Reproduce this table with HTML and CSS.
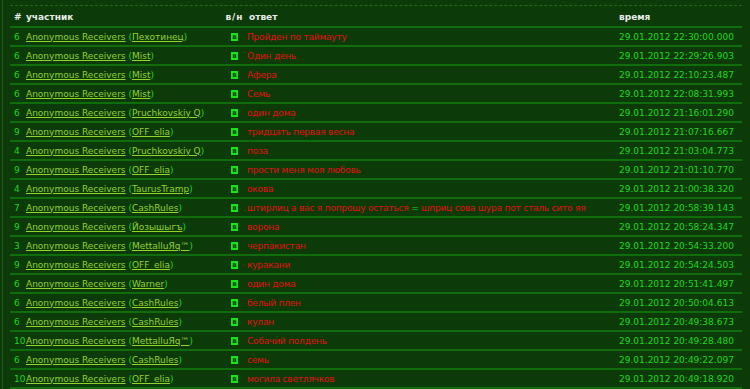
FILE: index.html
```html
<!DOCTYPE html>
<html>
<head>
<meta charset="utf-8">
<link rel="stylesheet" href="styles.css">
</head>
<body>
<div class="page">
  <div class="panel">
    <table class="log">
      <thead>
        <tr><th class="c-num">#</th><th class="c-team">участник</th><th class="c-vn">в/н</th><th class="c-ans">ответ</th><th class="c-time">время</th></tr>
      </thead>
      <tbody>
        <tr><td class="c-num">6</td><td class="c-team"><a href="#">Anonymous Receivers</a> (<a href="#">Пехотинец</a>)</td><td class="c-vn"><span class="badge">в</span></td><td class="c-ans">Пройден по таймауту</td><td class="c-time">29.01.2012 22:30:00.000</td></tr>
        <tr><td class="c-num">6</td><td class="c-team"><a href="#">Anonymous Receivers</a> (<a href="#">Mist</a>)</td><td class="c-vn"><span class="badge">в</span></td><td class="c-ans">Один день</td><td class="c-time">29.01.2012 22:29:26.903</td></tr>
        <tr><td class="c-num">6</td><td class="c-team"><a href="#">Anonymous Receivers</a> (<a href="#">Mist</a>)</td><td class="c-vn"><span class="badge">в</span></td><td class="c-ans">Афера</td><td class="c-time">29.01.2012 22:10:23.487</td></tr>
        <tr><td class="c-num">6</td><td class="c-team"><a href="#">Anonymous Receivers</a> (<a href="#">Mist</a>)</td><td class="c-vn"><span class="badge">в</span></td><td class="c-ans">Семь</td><td class="c-time">29.01.2012 22:08:31.993</td></tr>
        <tr><td class="c-num">6</td><td class="c-team"><a href="#">Anonymous Receivers</a> (<a href="#">Pruchkovskiy Q</a>)</td><td class="c-vn"><span class="badge">в</span></td><td class="c-ans">один дома</td><td class="c-time">29.01.2012 21:16:01.290</td></tr>
        <tr><td class="c-num">9</td><td class="c-team"><a href="#">Anonymous Receivers</a> (<a href="#">OFF_elia</a>)</td><td class="c-vn"><span class="badge">в</span></td><td class="c-ans">тридцать первая весна</td><td class="c-time">29.01.2012 21:07:16.667</td></tr>
        <tr><td class="c-num">4</td><td class="c-team"><a href="#">Anonymous Receivers</a> (<a href="#">Pruchkovskiy Q</a>)</td><td class="c-vn"><span class="badge">в</span></td><td class="c-ans">поза</td><td class="c-time">29.01.2012 21:03:04.773</td></tr>
        <tr><td class="c-num">9</td><td class="c-team"><a href="#">Anonymous Receivers</a> (<a href="#">OFF_elia</a>)</td><td class="c-vn"><span class="badge">в</span></td><td class="c-ans">прости меня моя любовь</td><td class="c-time">29.01.2012 21:01:10.770</td></tr>
        <tr><td class="c-num">4</td><td class="c-team"><a href="#">Anonymous Receivers</a> (<a href="#">TaurusTramp</a>)</td><td class="c-vn"><span class="badge">в</span></td><td class="c-ans">окова</td><td class="c-time">29.01.2012 21:00:38.320</td></tr>
        <tr><td class="c-num">7</td><td class="c-team"><a href="#">Anonymous Receivers</a> (<a href="#">CashRules</a>)</td><td class="c-vn"><span class="badge">в</span></td><td class="c-ans">штирлиц а вас я попрошу остаться <span class="eq">=</span> шприц сова шура пот сталь сито яя</td><td class="c-time">29.01.2012 20:58:39.143</td></tr>
        <tr><td class="c-num">9</td><td class="c-team"><a href="#">Anonymous Receivers</a> (<a href="#">Йозышыгъ</a>)</td><td class="c-vn"><span class="badge">в</span></td><td class="c-ans">ворона</td><td class="c-time">29.01.2012 20:58:24.347</td></tr>
        <tr><td class="c-num">3</td><td class="c-team"><a href="#">Anonymous Receivers</a> (<a href="#">MettalluЯq™</a>)</td><td class="c-vn"><span class="badge">в</span></td><td class="c-ans">черпакистан</td><td class="c-time">29.01.2012 20:54:33.200</td></tr>
        <tr><td class="c-num">9</td><td class="c-team"><a href="#">Anonymous Receivers</a> (<a href="#">OFF_elia</a>)</td><td class="c-vn"><span class="badge">в</span></td><td class="c-ans">куракани</td><td class="c-time">29.01.2012 20:54:24.503</td></tr>
        <tr><td class="c-num">6</td><td class="c-team"><a href="#">Anonymous Receivers</a> (<a href="#">Warner</a>)</td><td class="c-vn"><span class="badge">в</span></td><td class="c-ans">один дома</td><td class="c-time">29.01.2012 20:51:41.497</td></tr>
        <tr><td class="c-num">6</td><td class="c-team"><a href="#">Anonymous Receivers</a> (<a href="#">CashRules</a>)</td><td class="c-vn"><span class="badge">в</span></td><td class="c-ans">белый плен</td><td class="c-time">29.01.2012 20:50:04.613</td></tr>
        <tr><td class="c-num">6</td><td class="c-team"><a href="#">Anonymous Receivers</a> (<a href="#">CashRules</a>)</td><td class="c-vn"><span class="badge">в</span></td><td class="c-ans">кулан</td><td class="c-time">29.01.2012 20:49:38.673</td></tr>
        <tr><td class="c-num">10</td><td class="c-team"><a href="#">Anonymous Receivers</a> (<a href="#">MettalluЯq™</a>)</td><td class="c-vn"><span class="badge">в</span></td><td class="c-ans">Собачий полдень</td><td class="c-time">29.01.2012 20:49:28.480</td></tr>
        <tr><td class="c-num">6</td><td class="c-team"><a href="#">Anonymous Receivers</a> (<a href="#">CashRules</a>)</td><td class="c-vn"><span class="badge">в</span></td><td class="c-ans">семь</td><td class="c-time">29.01.2012 20:49:22.097</td></tr>
        <tr><td class="c-num">10</td><td class="c-team"><a href="#">Anonymous Receivers</a> (<a href="#">OFF_elia</a>)</td><td class="c-vn"><span class="badge">в</span></td><td class="c-ans">могила светлячков</td><td class="c-time">29.01.2012 20:49:18.920</td></tr>
      </tbody>
    </table>
  </div>
</div>
</body>
</html>
```
FILE: styles.css
```css
html, body {
  margin: 0;
  padding: 0;
  background: #0d3a09;
  height: 100%;
  overflow: hidden;
}
.page {
  margin-left: 2px;
  border-left: 1px solid #1f5a16;
  min-height: 100%;
  padding: 5px 0 0 7px;
  font-family: "DejaVu Sans", Verdana, sans-serif;
  font-size: 9px;
}
.panel {
  width: 732px;
  border-top: 1px dashed #1f6a16;
}
.log {
  width: 100%;
  border-collapse: collapse;
}
.log th {
  color: #e8ece8;
  font-weight: bold;
  text-align: left;
  height: 19px;
  padding: 0;
  border-bottom: 2px solid #0f6e0b;
  vertical-align: middle;
  padding-top: 1px;
}
.log td {
  height: 17px;
  padding: 0;
  border-bottom: 2px solid #0f6e0b;
  vertical-align: middle;
  white-space: nowrap;
}
.c-num {
  width: 12px;
  padding-left: 4px !important;
  color: #1ed81a;
}
th.c-num { color: #e8ece8; }
.c-team {
  width: 196px;
  color: #1ed81a;
}
.c-team a {
  color: #94d22c;
  text-decoration: underline;
}
.c-vn {
  width: 25px;
  text-align: center !important;
}
th.c-vn { letter-spacing: 1px; }
.c-ans {
  padding-left: 0;
  color: #e01010;
  width: 370px;
}
td.c-ans { letter-spacing: -0.2px; }
th.c-ans { padding-left: 2px !important; }
.c-time {
  color: #1ed81a;
}
.eq { color: #1ed81a; }
.badge {
  display: inline-block;
  width: 7px;
  height: 8px;
  line-height: 8px;
  background: #16e416;
  color: #0b4a08;
  font-size: 7px;
  font-weight: bold;
  text-align: center;
  vertical-align: middle;
  letter-spacing: 0;
}
```
